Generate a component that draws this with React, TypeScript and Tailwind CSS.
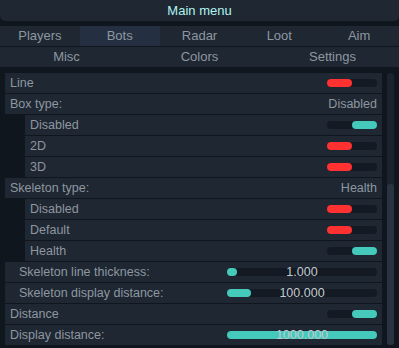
import React from "react"

type Row =
  | { kind: "toggle"; label: string; on: boolean; indent?: boolean }
  | { kind: "text"; label: string; value: string }
  | { kind: "slider"; label: string; value: string; fill: number; indent?: boolean }

const rows: Row[] = [
  { kind: "toggle", label: "Line", on: false },
  { kind: "text", label: "Box type:", value: "Disabled" },
  { kind: "toggle", label: "Disabled", on: true, indent: true },
  { kind: "toggle", label: "2D", on: false, indent: true },
  { kind: "toggle", label: "3D", on: false, indent: true },
  { kind: "text", label: "Skeleton type:", value: "Health" },
  { kind: "toggle", label: "Disabled", on: false, indent: true },
  { kind: "toggle", label: "Default", on: false, indent: true },
  { kind: "toggle", label: "Health", on: true, indent: true },
  { kind: "slider", label: "Skeleton line thickness:", value: "1.000", fill: 10, indent: true },
  { kind: "slider", label: "Skeleton display distance:", value: "100.000", fill: 24, indent: true },
  { kind: "toggle", label: "Distance", on: true },
  { kind: "slider", label: "Display distance:", value: "1000.000", fill: 150 },
]

function Toggle({ on }: { on: boolean }) {
  return (
    <div className={`flex w-[50px] h-[8px] rounded-full bg-[#131a23] ${on ? "justify-end" : "justify-start"}`}>
      <div className={`w-[25px] h-full rounded-full ${on ? "bg-[#45c9bb]" : "bg-[#ff3131]"}`} />
    </div>
  )
}

function Slider({ value, fill }: { value: string; fill: number }) {
  return (
    <div className="relative w-[150px] h-[8px] rounded-full bg-[#131a23]">
      <div className="h-full rounded-full bg-[#45c9bb]" style={{ width: fill }} />
      <span className="absolute inset-0 flex items-center justify-center text-[12.5px] text-[#c3cad1] leading-none">
        {value}
      </span>
    </div>
  )
}

function SettingRow({ row }: { row: Row }) {
  const subItem = row.kind === "toggle" && row.indent
  const subSlider = row.kind === "slider" && row.indent
  return (
    <div className={`flex items-center h-[20px] mb-px bg-[#1e2732] pr-[5px] ${subItem ? "ml-[20px] pl-[5px]" : subSlider ? "pl-[14px]" : "pl-[5px]"}`}>
      <span className="flex-1 text-[#8e97a0]">{row.label}</span>
      {row.kind === "toggle" && <Toggle on={row.on} />}
      {row.kind === "text" && <span className="text-[#8e97a0]">{row.value}</span>}
      {row.kind === "slider" && <Slider value={row.value} fill={row.fill} />}
    </div>
  )
}

export default function App() {
  const tabs1 = ["Players", "Bots", "Radar", "Loot", "Aim"]
  const tabs2 = ["Misc", "Colors", "Settings"]

  return (
    <main className="w-[399px] h-[348px] overflow-hidden bg-[#10161e] text-[12.5px] font-['Liberation_Sans',Arial,sans-serif]">
      {/* title */}
      <div className="h-[21px] rounded-b-[5px] bg-[#1e2732] flex items-center justify-center text-[13px] text-[#b2f3ef]">
        Main menu
      </div>

      {/* tabs */}
      <div className="mt-[5px] grid grid-cols-5 h-[20px] bg-[#1e2732] text-[13px] text-[#8e97a0]">
        {tabs1.map((t) => (
          <div key={t} className={`flex items-center justify-center ${t === "Bots" ? "bg-[#243041]" : ""}`}>
            {t}
          </div>
        ))}
      </div>
      <div className="mt-[1px] grid grid-cols-3 h-[20px] bg-[#1e2732] text-[13px] text-[#8e97a0]">
        {tabs2.map((t) => (
          <div key={t} className="flex items-center justify-center">
            {t}
          </div>
        ))}
      </div>

      {/* content */}
      <div className="flex mt-[6px] pl-[5px]">
        <div className="w-[377px]">
          {rows.map((r, i) => (
            <SettingRow key={i} row={r} />
          ))}
        </div>
        <div className="ml-[5px] w-[7px] h-[272px] rounded-[3px] bg-[#1b232d] flex flex-col justify-end">
          <div className="h-[161px] rounded-[3px] bg-[#2a3441]" />
        </div>
      </div>
    </main>
  )
}
